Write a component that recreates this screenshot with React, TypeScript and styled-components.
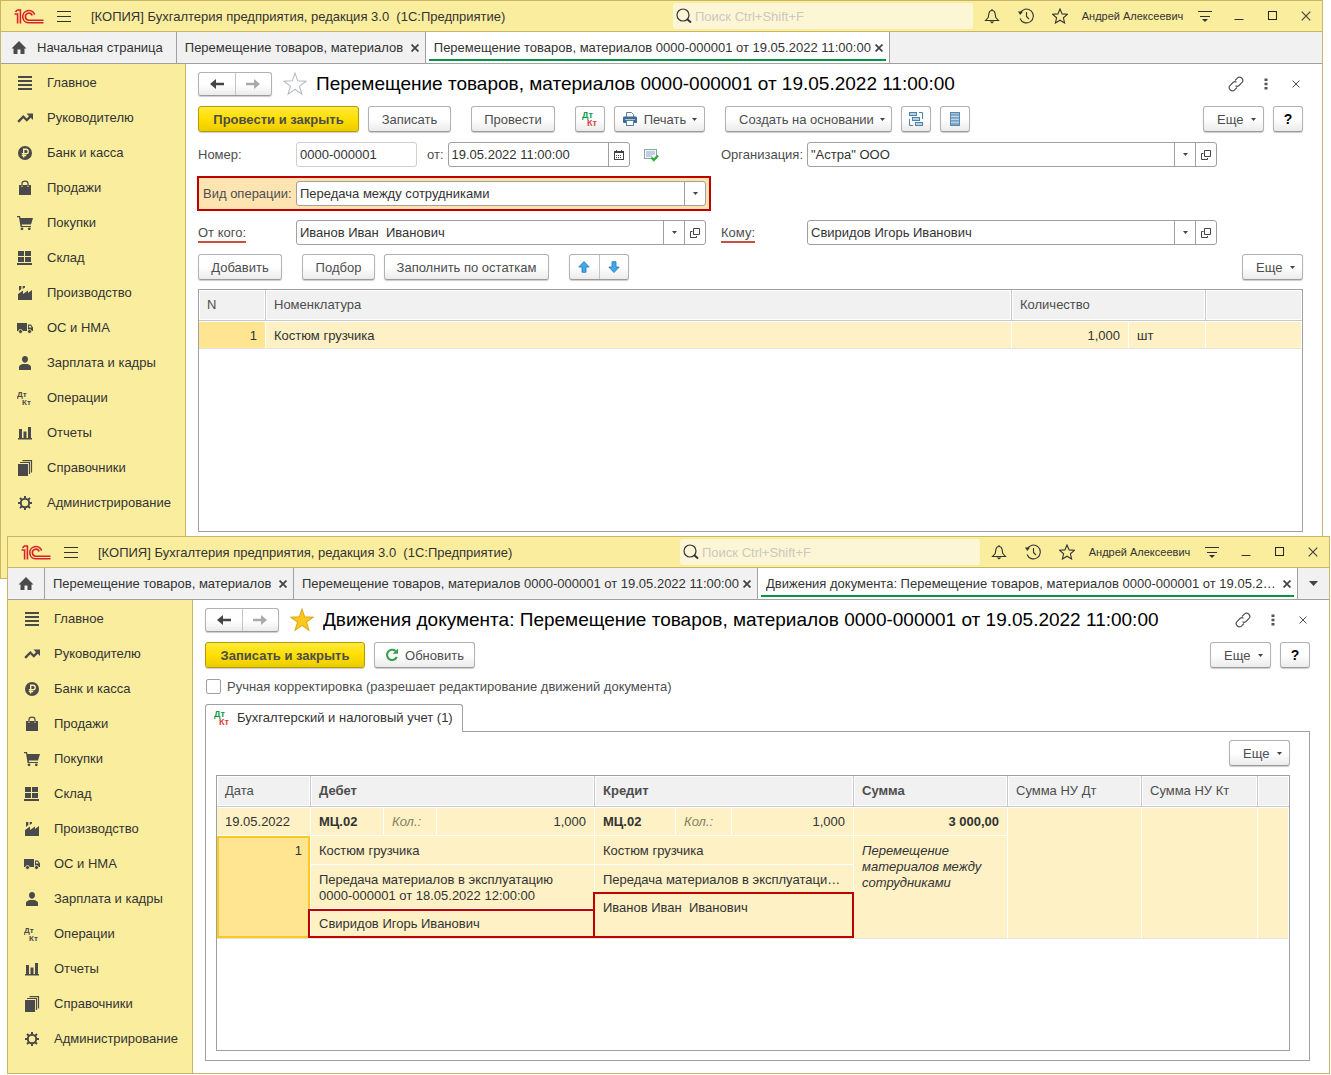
import React from "react";
import styled, { createGlobalStyle, css } from "styled-components";

const c = {
  yellow: "#fbed9e",
  gold: "#c8b665",
  strip: "#f1f1f1",
  line: "#a0a0a0",
  text: "#333333",
  label: "#4d4d4d",
  ink: "#4a4a4a",
  row: "#fef1c5",
  picked: "#ffe591",
  red: "#c00000",
  green: "#009646",
};

const GlobalStyle = createGlobalStyle`
  *, *::before, *::after { box-sizing: border-box; }
  body { margin: 0; background: #fff; }
  body, button, input, select {
    font-family: "Liberation Sans", Arial, sans-serif;
    font-size: 13px;
    color: ${c.text};
  }
  button { padding: 0; border: 0; background: none; cursor: pointer; }
  svg { display: block; flex: none; }
`;

/* ---------- window frame ---------- */

const Desktop = styled.div`
  display: flex;
  flex-direction: column;
`;

const WindowFrame = styled.section<{ $front?: boolean }>`
  display: flex;
  flex-direction: column;
  margin-right: 8px;
  border: 1px solid ${c.gold};
  background: #fff;
  ${(p) =>
    p.$front &&
    css`
      position: relative;
      margin: -43px 1px 0 7px;
    `}
`;

const TitleBar = styled.header`
  display: flex;
  align-items: center;
  height: 31px;
  padding-left: 13px;
  border-bottom: 1px solid ${c.gold};
  background: ${c.yellow};
`;

const MenuButton = styled.button`
  margin-left: 13px;
`;

const AppTitle = styled.div`
  flex: 1;
  margin-left: 20px;
  overflow: hidden;
  white-space: pre;
`;

const SearchBox = styled.label`
  display: flex;
  align-items: center;
  flex: 0 1 300px;
  height: 26px;
  margin-right: 2px;
  padding-left: 3px;
  border-radius: 3px;
  background: #fdf6d6;
`;

const SearchInput = styled.input`
  flex: 1;
  min-width: 0;
  padding: 0 3px;
  border: 0;
  outline: 0;
  background: transparent;
  &::placeholder { color: #cbc8bd; opacity: 1; }
`;

const BarButton = styled.button`
  display: flex;
  align-items: center;
  justify-content: center;
  width: 34px;
  height: 30px;
  &:last-child { width: 32px; }
`;

const UserName = styled.button`
  width: 111px;
  font-size: 11px;
  white-space: nowrap;
`;

const TabStrip = styled.nav`
  display: flex;
  height: 32px;
  border-bottom: 1px solid ${c.line};
  background: ${c.strip};
`;

const TabItem = styled.div<{ $active?: boolean; $w?: number }>`
  position: relative;
  display: flex;
  align-items: center;
  min-width: 0;
  flex: ${(p) => (p.$w ? `0 1 ${p.$w}px` : "1 1 0")};
  padding: 0 6px 0 8px;
  border-right: 1px solid ${c.line};
  background: ${(p) => (p.$active ? "#fff" : "transparent")};
  &::after {
    content: "";
    display: ${(p) => (p.$active ? "block" : "none")};
    position: absolute;
    left: 3px;
    right: 3px;
    bottom: 2px;
    height: 2px;
    background: ${c.green};
  }
`;

const TabButton = styled.button`
  display: flex;
  align-items: center;
  gap: 10px;
  min-width: 0;
`;

const TabLabel = styled.span`
  overflow: hidden;
  text-overflow: ellipsis;
  white-space: nowrap;
`;

const TabClose = styled.button`
  margin-left: auto;
  padding-left: 3px;
`;

const HomeTab = styled.div<{ $text?: boolean }>`
  display: flex;
  flex: none;
  padding: 0 ${(p) => (p.$text ? "13px" : "10px")} 0 10px;
  border-right: 1px solid ${c.line};
`;

const MoreTabs = styled.button`
  display: flex;
  align-items: center;
  justify-content: center;
  width: 31px;
`;

const WindowBody = styled.div`
  display: flex;
  flex: 1;
`;

const Sidebar = styled.nav`
  flex: none;
  width: 185px;
  padding-top: 1px;
  border-right: 1px solid ${c.gold};
  background: ${c.yellow};
`;

const SideLink = styled.a`
  display: flex;
  align-items: center;
  gap: 14px;
  height: 35px;
  padding-left: 16px;
  color: ${c.text};
  text-decoration: none;
  white-space: nowrap;
`;

const Main = styled.main<{ $bottom: number }>`
  display: flex;
  flex-direction: column;
  flex: 1;
  gap: 9px;
  min-width: 0;
  padding: 8px 19px ${(p) => p.$bottom}px 12px;
`;

/* ---------- document header and buttons ---------- */

const DocHeader = styled.div`
  display: flex;
  align-items: center;
  height: 25px;
  padding-bottom: 1px;
`;

const buttonFace = css`
  border: 1px solid #b2b2b2;
  border-bottom-color: #9a9a9a;
  border-radius: 3px;
  background: linear-gradient(#fff 50%, #ebebeb);
  box-shadow: 0 1px 1px rgba(0, 0, 0, 0.2);
`;

const ButtonPair = styled.div<{ $w: number; $h: number }>`
  display: flex;
  width: ${(p) => p.$w}px;
  height: ${(p) => p.$h}px;
  ${buttonFace}
  & > button {
    display: flex;
    flex: 1;
    align-items: center;
    justify-content: center;
  }
  & > button + button { border-left: 1px solid #c4c4c4; }
`;

const StarButton = styled.button`
  margin: 0 9px 0 11px;
`;

const DocTitle = styled.h1`
  flex: 1;
  margin: 0;
  overflow: hidden;
  color: #000;
  font-size: 19px;
  font-weight: 400;
  line-height: 24px;
  white-space: nowrap;
  text-overflow: ellipsis;
`;

const HeaderActions = styled.div`
  display: flex;
  align-items: center;
  & > button {
    display: flex;
    justify-content: center;
    width: 30px;
  }
  margin-right: -8px;
`;

const Toolbar = styled.div`
  display: flex;
  align-items: flex-start;
  gap: 9px;
`;

const Group = styled.div<{ $end?: boolean }>`
  display: flex;
  gap: 9px;
  margin-right: ${(p) => (p.$end ? 0 : 11)}px;
  margin-left: ${(p) => (p.$end ? "auto" : 0)};
`;

const Button = styled.button<{ $w: number; $primary?: boolean; $strong?: boolean; $menu?: boolean }>`
  display: flex;
  align-items: center;
  justify-content: center;
  gap: 6px;
  width: ${(p) => p.$w}px;
  height: 26px;
  margin-bottom: 1px;
  color: ${c.label};
  white-space: nowrap;
  ${buttonFace}
  ${(p) =>
    p.$menu &&
    css`
      justify-content: space-between;
      padding: 0 7px 0 13px;
    `}
  ${(p) =>
    p.$primary &&
    css`
      border-color: #b39b00;
      background: linear-gradient(#ffe93e, #ffdf00 50%, #eccd00);
      font-weight: 700;
    `}
  ${(p) =>
    p.$strong &&
    css`
      color: #000;
      font-size: 14px;
      font-weight: 700;
    `}
`;

/* ---------- form ---------- */

const Form = styled.form`
  display: grid;
  grid-template-columns: 98px minmax(0, 410px) 101px minmax(0, 410px);
  row-gap: 14px;
  align-items: center;
`;

const Label = styled.label<{ $second?: boolean; $marked?: boolean }>`
  padding-left: ${(p) => (p.$second ? 15 : 0)}px;
  color: ${c.label};
  white-space: nowrap;
  & > span {
    padding-bottom: 1px;
    border-bottom: ${(p) => (p.$marked ? "2px solid #c9503f" : "0")};
  }
`;

const InlineFields = styled.div`
  display: flex;
  align-items: center;
`;

const FieldBox = styled.div<{ $w?: number; $muted?: boolean }>`
  display: flex;
  width: ${(p) => (p.$w ? p.$w + "px" : "100%")};
  height: 25px;
  border: 1px solid ${(p) => (p.$muted ? "#d0d0d0" : c.line)};
  border-radius: 3px;
  background: #fff;
  overflow: hidden;
  & > button {
    display: flex;
    align-items: center;
    justify-content: center;
    width: 21px;
    border-left: 1px solid ${c.line};
  }
`;

const TextInput = styled.input`
  flex: 1;
  min-width: 0;
  padding: 0 3px;
  border: 0;
  outline: 0;
  background: transparent;
`;

const DateLabel = styled(Label)`
  padding: 0 4px 0 10px;
`;

const StatusIcon = styled.span`
  margin-left: 13px;
`;

const Highlight = styled.div`
  display: flex;
  align-items: center;
  grid-column: 1 / 3;
  margin: -5px -5px -5px -1px;
  padding: 3px 3px 3px 4px;
  border: 2px solid ${c.red};
  background: #ffe4b2;
  & > label { flex: none; width: 93px; }
`;

const SelectBox = styled.div`
  display: grid;
  flex: 1;
  grid-template-columns: 1fr 21px;
  height: 25px;
  border: 1px solid ${c.line};
  border-radius: 3px;
  background: #fff;
`;

const Select = styled.select`
  grid-area: 1 / 1 / 2 / 3;
  padding: 0 24px 0 3px;
  border: 0;
  outline: 0;
  background: transparent;
  appearance: none;
`;

const SelectArrow = styled.span`
  display: flex;
  grid-area: 1 / 2;
  align-items: center;
  justify-content: center;
  border-left: 1px solid ${c.line};
  pointer-events: none;
`;

/* ---------- tables ---------- */

const GridBlock = styled.div`
  display: flex;
  flex-direction: column;
  gap: 8px;
`;

const TableBox = styled.div<{ $h: number }>`
  min-height: ${(p) => p.$h}px;
  border: 1px solid ${c.line};
`;

const Table = styled.table`
  width: 100%;
  border-collapse: separate;
  border-spacing: 0;
  table-layout: fixed;
  line-height: 16px;
`;

const Th = styled.th<{ $bold?: boolean }>`
  height: 31px;
  padding: 0 8px;
  border-right: 1px solid #c9c9c9;
  border-bottom: 1px solid #c9c9c9;
  background: ${c.strip};
  box-shadow: inset 0 0 0 1px #fff;
  color: ${c.label};
  font-weight: ${(p) => (p.$bold ? 700 : 400)};
  text-align: left;
  white-space: nowrap;
  &:last-child { border-right: 0; }
`;

const Tr = styled.tr<{ $h: number }>`
  height: ${(p) => p.$h}px;
`;

const Td = styled.td<{
  $right?: boolean;
  $bold?: boolean;
  $italic?: boolean;
  $top?: boolean;
  $end?: boolean;
  $picked?: boolean;
}>`
  padding: ${(p) => (p.$top ? 6 : 7)}px 8px 0;
  border: 0 solid #fff;
  border-right-width: 1px;
  border-bottom-width: 1px;
  border-top-width: ${(p) => (p.$top ? 1 : 0)}px;
  border-bottom-color: ${(p) => (p.$end ? "#e2e2e2" : "#fff")};
  background: ${(p) => (p.$picked ? c.picked : c.row)};
  background-clip: padding-box;
  font-style: ${(p) => (p.$italic ? "italic" : "normal")};
  font-weight: ${(p) => (p.$bold ? 700 : 400)};
  text-align: ${(p) => (p.$right ? "right" : "left")};
  vertical-align: top;
  white-space: pre;
  overflow: hidden;
  text-overflow: ellipsis;
`;

const HintTd = styled(Td)`
  color: #85805f;
`;

const NoteTd = styled(Td)`
  white-space: normal;
`;

const CurrentTd = styled(Td)`
  box-shadow: inset 0 0 0 2px #fbc91f;
`;

const MarkedTd = styled(Td)<{ $out: number; $up: number }>`
  position: relative;
  overflow: visible;
  &::after {
    content: "";
    position: absolute;
    inset: -${(p) => p.$up}px -1px 0 -${(p) => p.$out}px;
    border: 2px solid ${c.red};
    pointer-events: none;
  }
`;

/* ---------- entries page ---------- */

const CheckRow = styled.label`
  display: flex;
  align-items: center;
  gap: 6px;
  height: 17px;
  padding-left: 1px;
  color: ${c.label};
`;

const Checkbox = styled.input`
  width: 15px;
  height: 15px;
  margin: 0;
  border: 1px solid ${c.line};
  border-radius: 2px;
  background: #fff;
  appearance: none;
  &:checked { background: ${c.green}; }
`;

const PageTab = styled.button`
  display: flex;
  align-items: center;
  gap: 7px;
  align-self: flex-start;
  position: relative;
  width: 258px;
  height: 28px;
  padding: 0 0 2px 8px;
  border: 1px solid ${c.line};
  border-bottom: 0;
  border-radius: 3px 3px 0 0;
  background: #fff;
  white-space: nowrap;
`;

const Pages = styled.div`
  display: flex;
  flex-direction: column;
`;

const PagePanel = styled.div`
  margin-top: -1px;
  padding: 8px 19px 9px 10px;
  border: 1px solid ${c.line};
`;

/* ---------- icons ---------- */

const Svg = ({ s = 16, w, h, children }: { s?: number; w?: number; h?: number; children: React.ReactNode }) => (
  <svg width={w ?? s} height={h ?? s} viewBox={`0 0 ${w ?? s} ${h ?? s}`} fill="none" aria-hidden="true">
    {children}
  </svg>
);

const Logo = () => (
  <Svg w={30} h={15}>
    <g stroke="#d8232a" strokeWidth="1.6">
      <path d="M0.5 5H3.6V14.5" />
      <path d="M1.4 2.9L3.6 1H6.4V14.5" />
      <path d="M20.6 5.6A6.1 6.1 0 1 0 15 13.8H29.5" />
      <path d="M18.2 6.6A3.5 3.5 0 1 0 15 11.2H29.5" />
    </g>
  </Svg>
);

const Burger = () => (
  <Svg w={14} h={13}>
    <path d="M0 1.5H14M0 6.5H14M0 11.5H14" stroke="#333" />
  </Svg>
);

const Magnifier = () => (
  <Svg>
    <circle cx="7" cy="7" r="6" stroke="#333" strokeWidth="1.2" />
    <path d="M11 11L15 14.5" stroke="#333" strokeWidth="2" />
  </Svg>
);

const Bell = () => (
  <Svg>
    <path d="M1.5 12.5H14.5L11.8 9.5L11 5.2C10.6 3.4 9.6 2.5 8 2.5S5.4 3.4 5 5.2L4.2 9.5ZM8 2.5V1" stroke="#333" strokeWidth="1.1" />
    <path d="M5.5 13.5H10.5L8 15.5Z" fill="#333" />
  </Svg>
);

const History = () => (
  <Svg>
    <path d="M2.2 5A6.9 6.9 0 1 1 2 10.5" stroke="#333" strokeWidth="1.1" />
    <path d="M8.5 4V8.5L11 11" stroke="#333" strokeWidth="1.1" />
    <path d="M0 3.5H5L2.2 7Z" fill="#333" />
  </Svg>
);

const starPath = "M8 1L10.1 5.9L15.4 6.3L11.4 9.8L12.6 15L8 12.2L3.4 15L4.6 9.8L0.6 6.3L5.9 5.9Z";

const SmallStar = () => (
  <Svg>
    <path d={starPath} stroke="#333" strokeWidth="1.1" />
  </Svg>
);

const BigStar = ({ filled }: { filled?: boolean }) => (
  <svg width="24" height="24" viewBox="0 0 16 16" fill={filled ? "#fcc81f" : "none"} aria-hidden="true">
    <path d="M8 0.8L9.8 5.9L15.4 6.1L11 9.4L12.6 14.8L8 11.6L3.4 14.8L5 9.4L0.6 6.1L6.2 5.9Z" stroke={filled ? "#d9a914" : "#b4b8be"} strokeWidth="0.7" />
  </svg>
);

const PanelMenu = () => (
  <Svg>
    <path d="M1 3.5H15M3 8.5H13" stroke="#333" />
    <path d="M5 11H11L8 14Z" fill="#333" />
  </Svg>
);

const Minimize = () => (
  <Svg s={10}>
    <path d="M0.5 8.5H9.5" stroke="#333" />
  </Svg>
);

const Maximize = () => (
  <Svg s={10}>
    <rect x="0.5" y="0.5" width="8" height="8" stroke="#222" />
  </Svg>
);

const Cross = ({ s = 10, bold }: { s?: number; bold?: boolean }) => (
  <svg width={s} height={s} viewBox="0 0 10 10" fill="none" aria-hidden="true">
    <path d="M0.7 0.7L9.3 9.3M9.3 0.7L0.7 9.3" stroke="#444" strokeWidth={bold ? 2.2 : 1.2} />
  </svg>
);

const Home = () => (
  <Svg>
    <path d="M8 1L15.5 8.5H13.5V14H9.5V9.5H6.5V14H2.5V8.5H0.5Z" fill={c.ink} />
  </Svg>
);

const Caret = ({ w = 5 }: { w?: number }) => (
  <svg width={w} height={w > 6 ? 5 : 3} viewBox="0 0 10 6" preserveAspectRatio="none" aria-hidden="true">
    <path d="M0 0H10L5 6Z" fill="#444" />
  </svg>
);

const Arrow = ({ back }: { back?: boolean }) => (
  <Svg w={16} h={12}>
    {back ? (
      <path d="M1 6L7 1V4.7H15V7.3H7V11Z" fill="#444" />
    ) : (
      <path d="M15 6L9 1V4.7H1V7.3H9V11Z" fill="#aaa" />
    )}
  </Svg>
);

const MoveArrow = ({ down }: { down?: boolean }) => (
  <Svg w={12} h={12}>
    <path
      d={down ? "M6 11.5L0.8 6H4V0.7H8V6H11.2Z" : "M6 0.5L0.8 6H4V11.3H8V6H11.2Z"}
      fill="#3fa9ee"
      stroke="#2674ae"
      strokeWidth="0.8"
    />
  </Svg>
);

const LinkIcon = () => (
  <Svg>
    <g stroke="#555" strokeWidth="1.2">
      <path d="M7 4.5L9.3 2.2A3.1 3.1 0 0 1 13.8 6.7L11 9.5A3 3 0 0 1 7.5 9.8" />
      <path d="M9 11.5L6.7 13.8A3.1 3.1 0 0 1 2.2 9.3L5 6.5A3 3 0 0 1 8.5 6.2" />
    </g>
  </Svg>
);

const Dots = () => (
  <Svg w={4} h={12}>
    <path d="M0.5 0.5H3.5V3H0.5ZM0.5 4.8H3.5V7.3H0.5ZM0.5 9H3.5V11.5H0.5Z" fill="#555" />
  </Svg>
);

const DtKt = ({ plain }: { plain?: boolean }) => (
  <svg
    width="16"
    height="16"
    viewBox="0 0 16 16"
    aria-hidden="true"
    fontSize={plain ? 8 : 9}
    fontWeight="700"
    fontFamily="Liberation Sans, Arial, sans-serif"
  >
    <text x="0" y="7" fill={plain ? c.ink : "#0b9a4a"}>Дт</text>
    <text x="5" y="15" fill={plain ? c.ink : "#e0403c"}>Кт</text>
  </svg>
);

const Printer = () => (
  <Svg>
    <path d="M4.5 6V1.5H9.5L11.5 3.5V6" fill="#fff" stroke="#5b7fa3" />
    <rect x="1" y="5.5" width="14" height="6.5" rx="1" fill="#3e6a96" />
    <path d="M3 8.5H13" stroke="#a9c3dc" />
    <rect x="4.5" y="9.5" width="7" height="5" fill="#fff" stroke="#5b7fa3" />
  </Svg>
);

const Structure = () => (
  <Svg>
    <g stroke="#4d82ab">
      <rect x="1.5" y="1.5" width="7" height="3" fill="#b6d0e6" />
      <rect x="4.5" y="6.5" width="7" height="3" fill="#b6d0e6" />
      <rect x="7.5" y="11.5" width="7" height="3" fill="#b6d0e6" />
      <path d="M11 1.5H14.5V8M1.5 8V14.5H5" />
    </g>
  </Svg>
);

const ListIcon = () => (
  <Svg>
    <rect x="3.5" y="1.5" width="9" height="13" fill="#9fc0dc" stroke="#5a89af" />
    <path d="M4 5H12M4 8H12M4 11H12" stroke="#d9e8f4" />
    <path d="M4 4H12M4 7H12M4 10H12M4 13H12" stroke="#5a89af" />
  </Svg>
);

const Calendar = () => (
  <Svg w={10} h={10}>
    <rect x="0.5" y="1.5" width="9" height="8" stroke="#444" />
    <path d="M0 2.5H10M2.5 0V3M7.5 0V3" stroke="#444" />
    <path d="M2 5.5H8M2 7.5H8" stroke="#444" strokeDasharray="1 1" />
  </Svg>
);

const OpenIcon = () => (
  <Svg w={10} h={10}>
    <path d="M3.5 0.5H9.5V6.5H3.5ZM2.5 3.5H0.5V9.5H6.5V8" stroke="#444" />
  </Svg>
);

const Posted = () => (
  <Svg>
    <rect x="1.5" y="2.5" width="12" height="9" fill="#f4f7fa" stroke="#8fa0b0" />
    <path d="M3 5H12M3 7H12M3 9H9" stroke="#8ea9c4" />
    <path d="M8.5 10.5L10.8 13L15 8.5" stroke="#2fae3b" strokeWidth="2.4" />
  </Svg>
);

const Refresh = () => (
  <Svg w={14} h={14}>
    <path d="M10.5 3A5.1 5.1 0 1 0 11.8 9" stroke="#34a04a" strokeWidth="2" />
    <path d="M7.5 5.8H13V0.5Z" fill="#34a04a" />
  </Svg>
);

const sideIcons: Record<string, React.ReactNode> = {
  main: <path d="M1 1h14v2H1zM1 5h14v2H1zM1 9h14v2H1zM1 13h14v2H1z" />,
  trend: <path d="M9.5 3.5H16V10L13.8 7.8L9.8 11.8L6.3 8.3L2 12.8L0.3 11L6.3 5L9.8 8.5L12 6Z" />,
  bank: (
    <>
      <circle cx="8" cy="8" r="7" />
      <path d="M6.7 12.5V4.2H9A2.2 2.2 0 0 1 9 8.7H4.8M4.8 10.6H9.2" fill="none" stroke={c.yellow} strokeWidth="1.4" />
    </>
  ),
  sales: (
    <>
      <path d="M2 5H4.5V7H5.5V5H10.5V7H11.5V5H14V15H2Z" />
      <path d="M5 6V3.5C5 0.3 11 0.3 11 3.5V6" fill="none" stroke={c.ink} strokeWidth="1.2" />
    </>
  ),
  cart: (
    <>
      <path d="M0 1H3L3.5 3H16L14 9.5H4.8L5 11H14V12H3.6L2 2.3H0Z" />
      <circle cx="5" cy="13.8" r="1.4" />
      <circle cx="12.3" cy="13.8" r="1.4" />
    </>
  ),
  store: <path d="M1 1h6v5H1zM8 1h6v5H8zM1 7h6v5H1zM8 7h6v5H8zM0 13h15v2H0z" />,
  factory: <path d="M1 15V9L6 5.5V9L11 5.5V8L15 5V15ZM2 1H4.3V4L2 6ZM5.7 1H8V2.5L5.7 4Z" />,
  truck: (
    <>
      <path d="M0 3H10V11H0ZM11 4.5H14L16 7.5V11H11Z" />
      <path d="M12 5.7H13.6L14.6 7.5H12Z" fill={c.yellow} />
      <circle cx="3.5" cy="11.5" r="2" stroke={c.yellow} strokeWidth="0.8" />
      <circle cx="12.5" cy="11.5" r="2" stroke={c.yellow} strokeWidth="0.8" />
    </>
  ),
  person: <path d="M8 1C10 1 11 2.4 11 4.2S9.6 7.8 8 7.8S5 6 5 4.2S6 1 8 1ZM2 15V12C2 10 4.5 9.4 6 9H10C11.5 9.4 14 10 14 12V15Z" />,
  reports: <path d="M2 4h3v9H2zM6.5 6.5h3V13h-3zM11 2h3v11h-3zM1 13h14v1.4H1z" />,
  books: (
    <>
      <path d="M1 4h10v12H1z" />
      <path d="M3 2.5H12.5V14M5.5 0.6H14.5V12.5" fill="none" stroke={c.ink} strokeWidth="1.2" />
    </>
  ),
  gear: (
    <>
      <circle cx="8" cy="8" r="4.2" fill="none" stroke={c.ink} strokeWidth="2" />
      <path
        d="M8 1V3.5M8 12.5V15M1 8H3.5M12.5 8H15M3 3L4.8 4.8M11.2 11.2L13 13M13 3L11.2 4.8M4.8 11.2L3 13"
        stroke={c.ink}
        strokeWidth="2"
      />
    </>
  ),
};

const sections: [string, string][] = [
  ["main", "Главное"],
  ["trend", "Руководителю"],
  ["bank", "Банк и касса"],
  ["sales", "Продажи"],
  ["cart", "Покупки"],
  ["store", "Склад"],
  ["factory", "Производство"],
  ["truck", "ОС и НМА"],
  ["person", "Зарплата и кадры"],
  ["dtkt", "Операции"],
  ["reports", "Отчеты"],
  ["books", "Справочники"],
  ["gear", "Администрирование"],
];

/* ---------- shared parts ---------- */

type TabData = { label: string; active?: boolean; width?: number };

type AppWindowProps = {
  front?: boolean;
  homeLabel?: string;
  tabs: TabData[];
  overflow?: boolean;
  bottom: number;
  children: React.ReactNode;
};

const AppWindow = ({ front, homeLabel, tabs, overflow, bottom, children }: AppWindowProps) => (
  <WindowFrame $front={front}>
    <TitleBar>
      <Logo />
      <MenuButton type="button" aria-label="Меню"><Burger /></MenuButton>
      <AppTitle>{"[КОПИЯ] Бухгалтерия предприятия, редакция 3.0  (1С:Предприятие)"}</AppTitle>
      <SearchBox>
        <Magnifier />
        <SearchInput type="search" placeholder="Поиск Ctrl+Shift+F" aria-label="Поиск" />
      </SearchBox>
      <BarButton type="button" aria-label="Уведомления"><Bell /></BarButton>
      <BarButton type="button" aria-label="История"><History /></BarButton>
      <BarButton type="button" aria-label="Избранное"><SmallStar /></BarButton>
      <UserName type="button">Андрей Алексеевич</UserName>
      <BarButton type="button" aria-label="Настройки"><PanelMenu /></BarButton>
      <BarButton type="button" aria-label="Свернуть"><Minimize /></BarButton>
      <BarButton type="button" aria-label="Развернуть"><Maximize /></BarButton>
      <BarButton type="button" aria-label="Закрыть"><Cross /></BarButton>
    </TitleBar>
    <TabStrip>
      <HomeTab $text={!!homeLabel}>
        <TabButton type="button" aria-label="Начальная страница">
          <Home />
          {homeLabel && <TabLabel>{homeLabel}</TabLabel>}
        </TabButton>
      </HomeTab>
      {tabs.map((t) => (
        <TabItem key={t.label} $active={t.active} $w={t.width}>
          <TabButton type="button"><TabLabel>{t.label}</TabLabel></TabButton>
          <TabClose type="button" aria-label="Закрыть вкладку"><Cross s={8} bold /></TabClose>
        </TabItem>
      ))}
      {overflow && <MoreTabs type="button" aria-label="Все вкладки"><Caret w={9} /></MoreTabs>}
    </TabStrip>
    <WindowBody>
      <Sidebar>
        {sections.map(([icon, label]) => (
          <SideLink key={label} href="#">
            {icon === "dtkt" ? (
              <DtKt plain />
            ) : (
              <svg width="16" height="16" viewBox="0 0 16 16" fill={c.ink} aria-hidden="true">{sideIcons[icon]}</svg>
            )}
            {label}
          </SideLink>
        ))}
      </Sidebar>
      <Main $bottom={bottom}>{children}</Main>
    </WindowBody>
  </WindowFrame>
);

const DocumentHeader = ({ title, starred }: { title: string; starred?: boolean }) => (
  <DocHeader>
    <ButtonPair $w={74} $h={24}>
      <button type="button" aria-label="Назад"><Arrow back /></button>
      <button type="button" aria-label="Вперед"><Arrow /></button>
    </ButtonPair>
    <StarButton type="button" aria-label="В избранное"><BigStar filled={starred} /></StarButton>
    <DocTitle>{title}</DocTitle>
    <HeaderActions>
      <button type="button" aria-label="Ссылка"><LinkIcon /></button>
      <button type="button" aria-label="Еще"><Dots /></button>
      <button type="button" aria-label="Закрыть"><Cross s={8} /></button>
    </HeaderActions>
  </DocHeader>
);

const MoreButton = () => (
  <Button type="button" $w={61} $menu>Еще<Caret /></Button>
);

const RefField = ({ id, value }: { id: string; value: string }) => (
  <FieldBox>
    <TextInput id={id} defaultValue={value} />
    <button type="button" aria-label="Выбрать"><Caret /></button>
    <button type="button" aria-label="Открыть"><OpenIcon /></button>
  </FieldBox>
);

const docName = "Перемещение товаров, материалов 0000-000001 от 19.05.2022 11:00:00";

/* ---------- pages ---------- */

const TransferPage = () => (
  <>
    <DocumentHeader title={docName} />
    <Toolbar>
      <Group>
        <Button type="button" $w={161} $primary>Провести и закрыть</Button>
        <Button type="button" $w={83}>Записать</Button>
      </Group>
      <Group>
        <Button type="button" $w={84}>Провести</Button>
      </Group>
      <Group>
        <Button type="button" $w={30} aria-label="Дт Кт"><DtKt /></Button>
        <Button type="button" $w={91}><Printer />Печать<Caret /></Button>
      </Group>
      <Group>
        <Button type="button" $w={167} $menu>Создать на основании<Caret /></Button>
        <Button type="button" $w={30} aria-label="Структура"><Structure /></Button>
        <Button type="button" $w={30} aria-label="Список"><ListIcon /></Button>
      </Group>
      <Group $end>
        <MoreButton />
        <Button type="button" $w={30} $strong>?</Button>
      </Group>
    </Toolbar>
    <Form>
      <Label htmlFor="number">Номер:</Label>
      <InlineFields>
        <FieldBox $w={121} $muted><TextInput id="number" defaultValue="0000-000001" /></FieldBox>
        <DateLabel htmlFor="date">от:</DateLabel>
        <FieldBox $w={182}>
          <TextInput id="date" defaultValue="19.05.2022 11:00:00" />
          <button type="button" aria-label="Календарь"><Calendar /></button>
        </FieldBox>
        <StatusIcon><Posted /></StatusIcon>
      </InlineFields>
      <Label htmlFor="org" $second>Организация:</Label>
      <RefField id="org" value={'"Астра" ООО'} />
      <Highlight>
        <Label htmlFor="kind">Вид операции:</Label>
        <SelectBox>
          <Select id="kind"><option>Передача между сотрудниками</option></Select>
          <SelectArrow><Caret /></SelectArrow>
        </SelectBox>
      </Highlight>
      <span /><span />
      <Label htmlFor="from" $marked><span>От кого:</span></Label>
      <RefField id="from" value="Иванов Иван  Иванович" />
      <Label htmlFor="to" $second $marked><span>Кому:</span></Label>
      <RefField id="to" value="Свиридов Игорь Иванович" />
    </Form>
    <GridBlock>
      <Toolbar>
        <Group>
          <Button type="button" $w={84}>Добавить</Button>
        </Group>
        <Group>
          <Button type="button" $w={73}>Подбор</Button>
          <Button type="button" $w={165}>Заполнить по остаткам</Button>
        </Group>
        <ButtonPair $w={60} $h={26}>
          <button type="button" aria-label="Вверх"><MoveArrow /></button>
          <button type="button" aria-label="Вниз"><MoveArrow down /></button>
        </ButtonPair>
        <Group $end><MoreButton /></Group>
      </Toolbar>
      <TableBox $h={243}>
        <Table>
          <colgroup>
            <col width="67" /><col /><col width="117" /><col width="77" /><col width="96" />
          </colgroup>
          <thead>
            <tr><Th>N</Th><Th>Номенклатура</Th><Th colSpan={2}>Количество</Th><Th /></tr>
          </thead>
          <tbody>
            <Tr $h={28}>
              <Td $top $end $right $picked>1</Td>
              <Td $top $end>Костюм грузчика</Td>
              <Td $top $end $right>1,000</Td>
              <Td $top $end>шт</Td>
              <Td $top $end />
            </Tr>
          </tbody>
        </Table>
      </TableBox>
    </GridBlock>
  </>
);

const EntriesPage = () => (
  <>
    <DocumentHeader title={"Движения документа: " + docName} starred />
    <Toolbar>
      <Group>
        <Button type="button" $w={160} $primary>Записать и закрыть</Button>
        <Button type="button" $w={101}><Refresh />Обновить</Button>
      </Group>
      <Group $end>
        <MoreButton />
        <Button type="button" $w={30} $strong>?</Button>
      </Group>
    </Toolbar>
    <CheckRow>
      <Checkbox type="checkbox" />
      Ручная корректировка (разрешает редактирование движений документа)
    </CheckRow>
    <Pages>
      <PageTab type="button"><DtKt />Бухгалтерский и налоговый учет (1)</PageTab>
      <PagePanel>
        <GridBlock>
          <Toolbar>
            <Group $end><MoreButton /></Group>
          </Toolbar>
          <TableBox $h={276}>
            <Table>
              <colgroup>
                <col width="94" />
                <col width="73" /><col width="53" /><col />
                <col width="81" /><col width="56" /><col width="122" />
                <col width="154" /><col width="134" /><col width="116" /><col width="31" />
              </colgroup>
              <thead>
                <tr>
                  <Th>Дата</Th><Th colSpan={3} $bold>Дебет</Th><Th colSpan={3} $bold>Кредит</Th>
                  <Th $bold>Сумма</Th><Th>Сумма НУ Дт</Th><Th>Сумма НУ Кт</Th><Th />
                </tr>
              </thead>
              <tbody>
                <Tr $h={29}>
                  <Td $top>19.05.2022</Td>
                  <Td $top $bold>МЦ.02</Td><HintTd $top $italic>Кол.:</HintTd><Td $top $right>1,000</Td>
                  <Td $top $bold>МЦ.02</Td><HintTd $top $italic>Кол.:</HintTd><Td $top $right>1,000</Td>
                  <Td $top $bold $right>3 000,00</Td>
                  <Td $top $end rowSpan={5} /><Td $top $end rowSpan={5} /><Td $top $end rowSpan={5} />
                </Tr>
                <Tr $h={29}>
                  <CurrentTd $end $right $picked rowSpan={4}>1</CurrentTd>
                  <Td colSpan={3}>Костюм грузчика</Td>
                  <Td colSpan={3}>Костюм грузчика</Td>
                  <NoteTd $end $italic rowSpan={4}>Перемещение материалов между сотрудниками</NoteTd>
                </Tr>
                <Tr $h={28}>
                  <Td colSpan={3} rowSpan={2}>{"Передача материалов в эксплуатацию\n0000-000001 от 18.05.2022 12:00:00"}</Td>
                  <Td colSpan={3}>Передача материалов в эксплуатаци…</Td>
                </Tr>
                <Tr $h={16}>
                  <MarkedTd $end colSpan={3} rowSpan={2} $out={2} $up={1}>{"Иванов Иван  Иванович"}</MarkedTd>
                </Tr>
                <Tr $h={30}>
                  <MarkedTd $end colSpan={3} $out={3} $up={0}>Свиридов Игорь Иванович</MarkedTd>
                </Tr>
              </tbody>
            </Table>
          </TableBox>
        </GridBlock>
      </PagePanel>
    </Pages>
  </>
);

export default function App() {
  return (
    <>
      <GlobalStyle />
      <Desktop>
        <AppWindow
          homeLabel="Начальная страница"
          bottom={46}
          tabs={[
            { label: "Перемещение товаров, материалов", width: 249 },
            { label: docName, active: true, width: 464 },
          ]}
        >
          <TransferPage />
        </AppWindow>
        <AppWindow
          front
          overflow
          bottom={12}
          tabs={[
            { label: "Перемещение товаров, материалов", width: 249 },
            { label: docName, width: 464 },
            { label: "Движения документа: Перемещение товаров, материалов 0000-000001 от 19.05.2…", active: true },
          ]}
        >
          <EntriesPage />
        </AppWindow>
      </Desktop>
    </>
  );
}
